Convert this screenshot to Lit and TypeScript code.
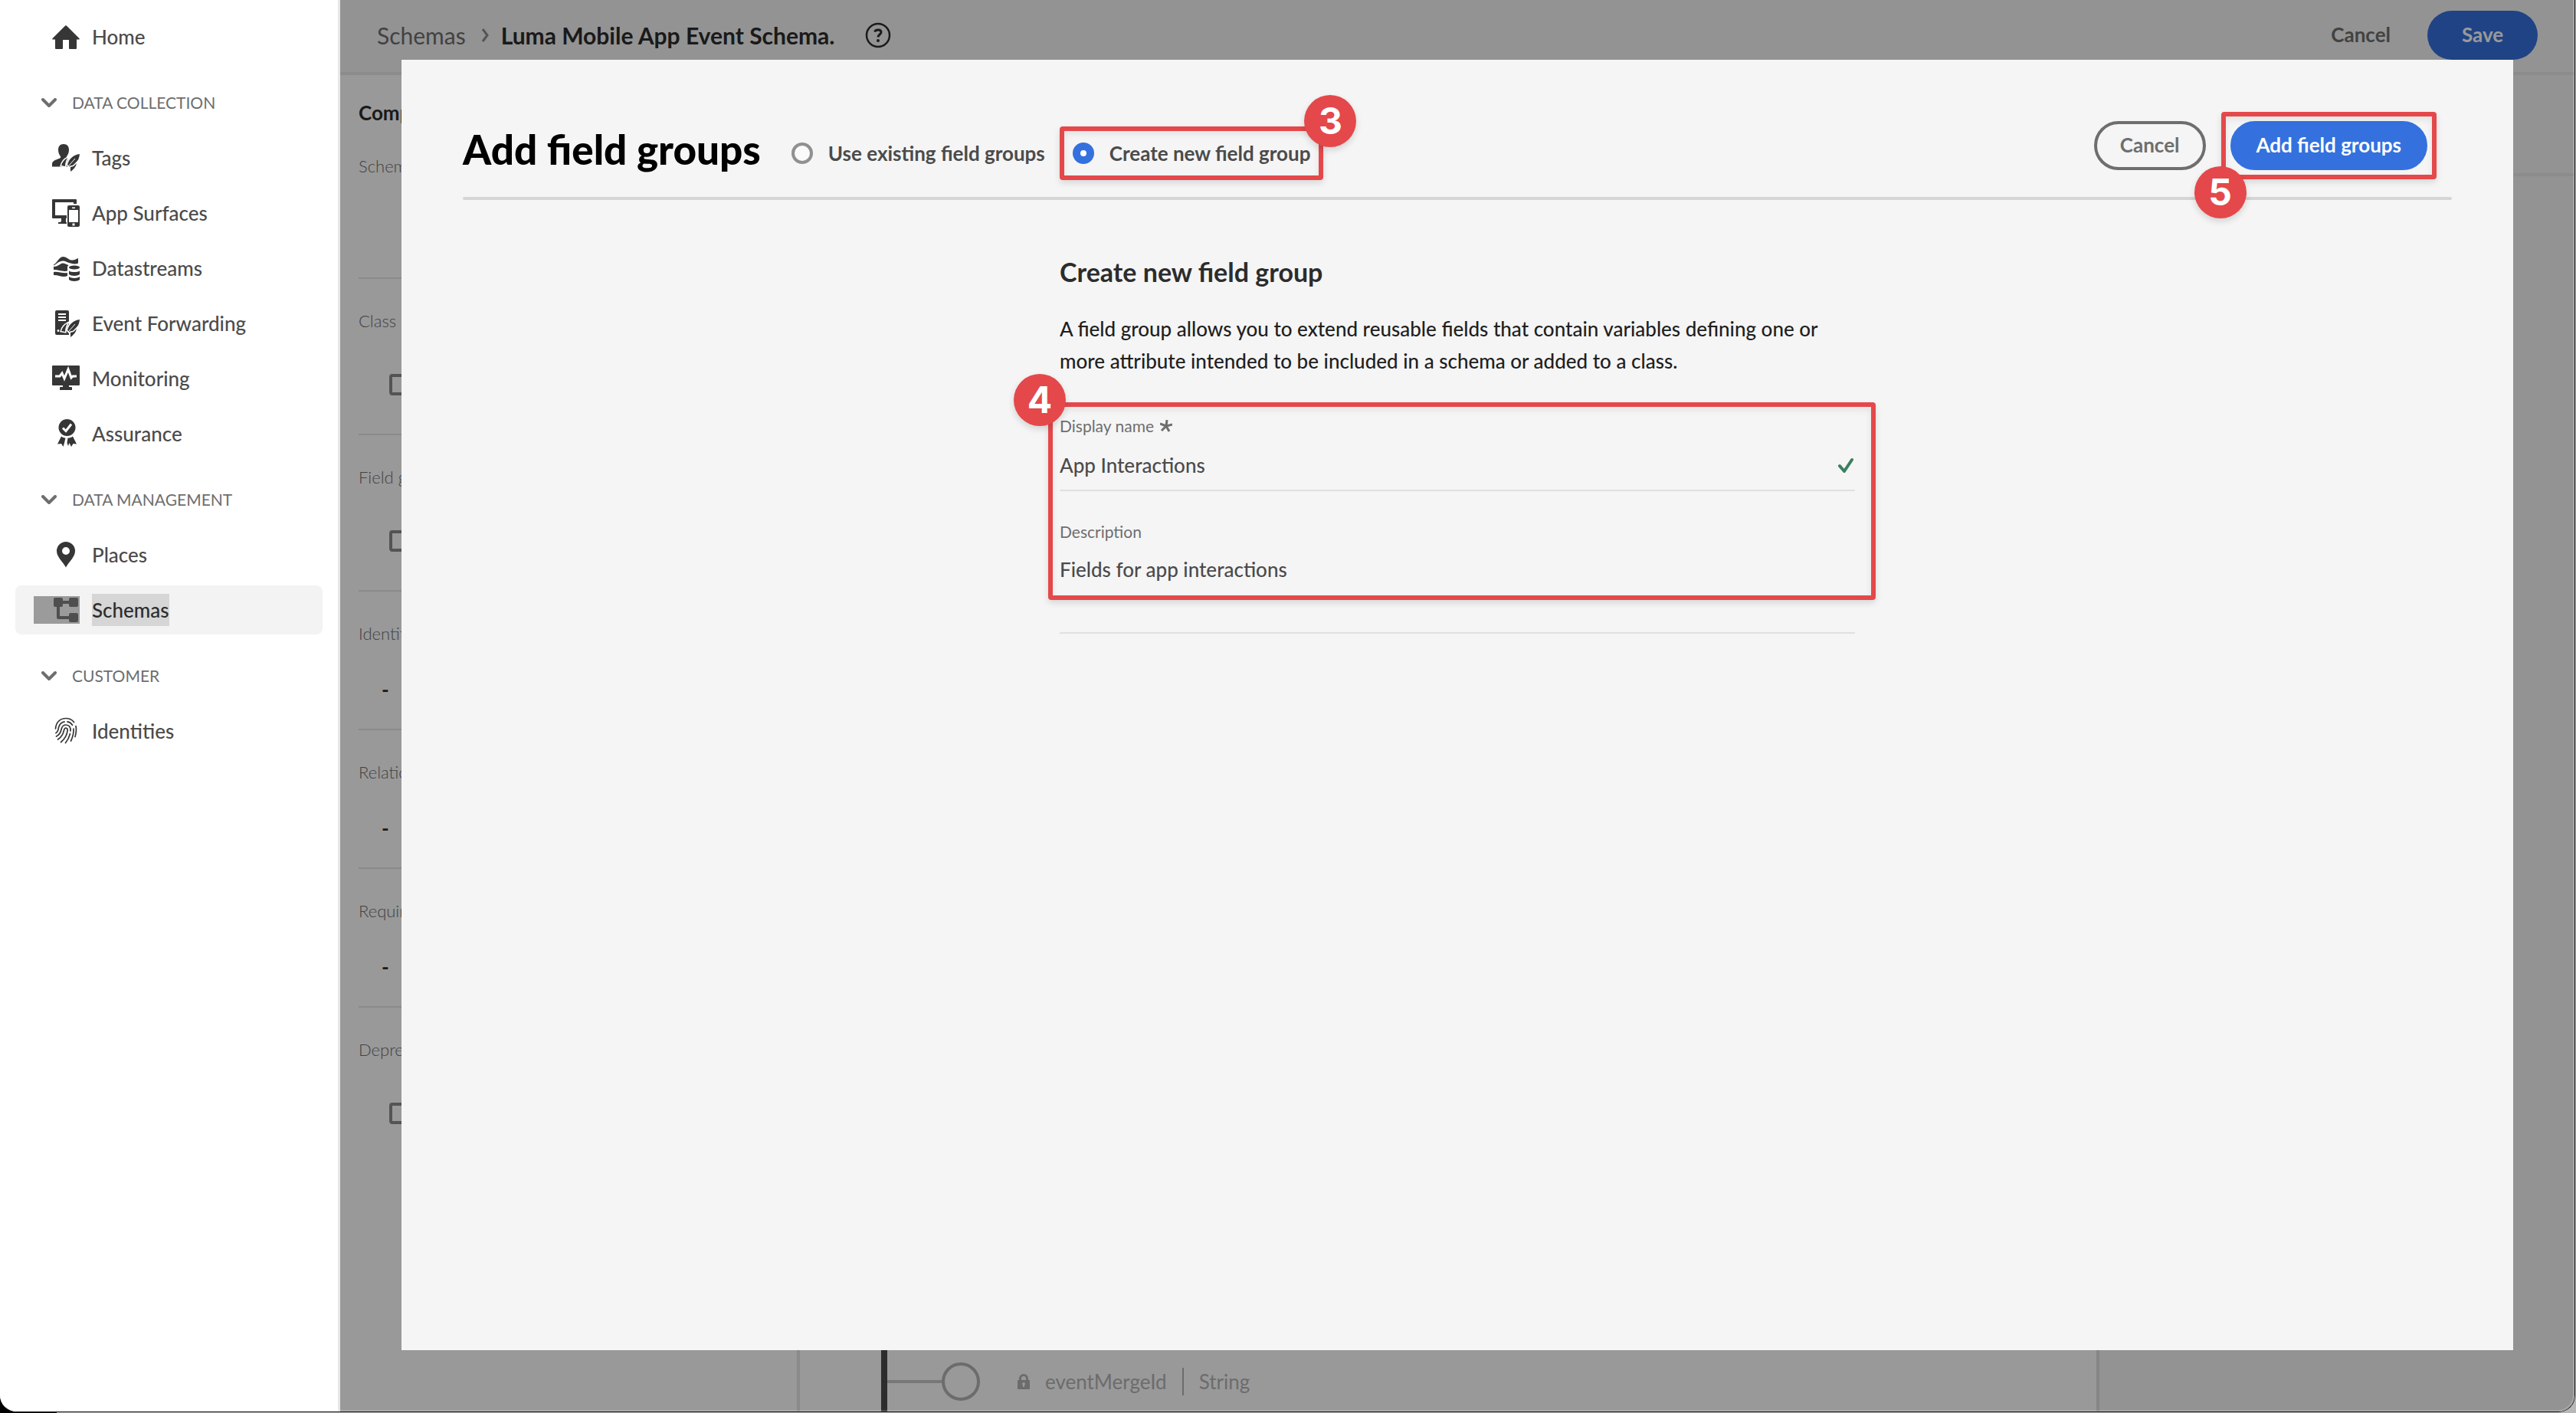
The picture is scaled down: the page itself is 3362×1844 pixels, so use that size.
import { LitElement, html, css, svg, nothing, type TemplateResult } from "lit";
import { customElement, property } from "lit/decorators.js";
import { classMap } from "lit/directives/class-map.js";

const feather = svg`
  <path class="halo" d="M36 13C28 14 22 19 20 27l3 3C30 28 35 22 36 13Z" />
  <path class="halo" d="M20 18C16 20 13 24 12 28l5 1C17 25 18 22 20 18Z" />
  <path class="halo" d="M32 25l-4 4-4 1v6C28 33 31 30 32 25Z" />
  <path class="halo-line" d="M21 29 30 19" />`;

const icons: Record<string, TemplateResult | ReturnType<typeof svg>> = {
  home: svg`<path d="M18 3.2a1 1 0 0 1 .8.4L35.6 20.2a.9.9 0 0 1-.6 1.4h-3V33a1 1 0 0 1-1 1h-8a1 1 0 0 1-1-1V22.500a.5.5 0 0 0-.5-.5h-7a.5.5 0 0 0-.5.500V33a1 1 0 0 1-1 1H5a1 1 0 0 1-1-1V21.600H1a.9.9 0 0 1-.6-1.400L17.200 3.600A1 1 0 0 1 18 3.200Z" />`,
  tags: svg`<path d="M15 0c4.600 0 7 3 7 7.600 0 3.800-1.400 6.800-3 8.400v2.500c0 1.500 8 2.500 9 6.500v4.500H0V26c0-4 5-5.500 9-7 1.500-.6 2-.8 2-1.500V16c-1.600-1.600-3-4.600-3-8.400C8 3 10.400 0 15 0Z" />${feather}`,
  surfaces: svg`
    <path d="M1 0h30a1 1 0 0 1 1 1v5h-4V4H4v17h15v4h-1v5h1v2H8v-2h2a2 2 0 0 0 2-2v-3H1a1 1 0 0 1-1-1V1a1 1 0 0 1 1-1Z" />
    <path fill-rule="evenodd" d="M22 8h12a2 2 0 0 1 2 2v24a2 2 0 0 1-2 2H22a2 2 0 0 1-2-2V10a2 2 0 0 1 2-2Zm0 6v16h12V14Zm4-3.500v1.500h4v-1.500Zm.5 21v3h3v-3Z" />`,
  datastreams: svg`
    <path d="M2 13.500C6 12 9 3 14 3c6 0 7 4.500 11.500 4.500C30 7.500 31 6 34 5v6.500c-3 1.500-6 1-10 0C19 10 17 8.500 14 8.500c-5 0-8 4-12 6Z" />
    <path d="M2 16c7 0 8-4.500 12-4.500 3 0 4.500 1.500 7.500 2.500L20 16v5.500C14 23 9 20 2 20Z" />
    <path d="M2 23c6-1 11 2 18 1v4C14 31 8 26.500 2 27Z" />
    <ellipse cx="29" cy="17" rx="7" ry="2.600" />
    <path d="M22 21.500c3 2 11 2 14 0v4.500c-3 2.500-11 2.500-14 0Z" />
    <path d="M22 29c3 2.500 11 2.500 14 0v4c-3 2.600-11 2.600-14 0Z" />`,
  forwarding: svg`
    <path fill-rule="evenodd" d="M6 1h14a2 2 0 0 1 2 2v30H6a2 2 0 0 1-2-2V3a2 2 0 0 1 2-2Zm2 4v2h10V5Zm0 4v2h10V9Zm0 4v2h10v-2ZM8 26a1.500 1.500 0 1 0 0 3 1.500 1.500 0 0 0 0-3Z" />${feather}`,
  monitoring: svg`
    <path d="M1 1h34a1 1 0 0 1 1 1v24a1 1 0 0 1-1 1H22v2h3a1 1 0 0 1 1 1v3H10v-3a1 1 0 0 1 1-1h3v-2H1a1 1 0 0 1-1-1V2a1 1 0 0 1 1-1Z" />
    <path class="cut" d="M4 15h6l3-4 3 7 5-12 4 11 2-2h5" />`,
  assurance: svg`
    <circle cx="19.500" cy="10" r="11" />
    <path class="cut" d="m14 10.500 4 4 7-9" />
    <path d="M12 21.500c2 1.500 3.500 2 5.500 2L16 30l-1.500 5-2.500-4-5 .5Z M20.500 23.500c3 0 4.500-.5 6.500-2l5 10-4.500-.5L25 35l-2.500-5-1.500 4-1.500-4Z" />`,
  places: svg`<path fill-rule="evenodd" d="M18 1a12 12 0 0 1 12 12c0 8-8 14-12 21.500C14 27 6 21 6 13A12 12 0 0 1 18 1Zm0 7a5 5 0 1 0 0 10 5 5 0 0 0 0-10Z" />`,
  schemas: svg`<path d="M4 2h8a2 2 0 0 1 2 2v2h8V4a2 2 0 0 1 2-2h8a2 2 0 0 1 2 2v8a2 2 0 0 1-2 2h-8a2 2 0 0 1-2-2v-2h-8v2a2 2 0 0 1-2 2h-2v12h12v-2a2 2 0 0 1 2-2h8a2 2 0 0 1 2 2v8a2 2 0 0 1-2 2h-8a2 2 0 0 1-2-2v-2H8a2 2 0 0 1-2-2V14H4a2 2 0 0 1-2-2V4a2 2 0 0 1 2-2Z" />`,
  identities: svg`<g class="ridge">
    <path d="M4.500 15C5 7 10 1.500 18 1.500c4.500 0 8 1.500 10.500 5" />
    <path d="M5 20.500c3-1.500 3-4.500 3.500-7C9.500 9 12.500 6.500 16 5.800M20 5.800c3 .5 5 2 6.500 4.500" />
    <path d="M31 11.500c1 5 .5 9-1 14M5.500 25c5-2.500 6-6 6.800-10 .9-3.500 3-5 5.700-5 4.500 0 6.500 3.500 6 8" />
    <path d="M7.500 29c6-4 7-8 8.500-13.500 1-2.500 4.500-1.500 4.200 1.500C19.500 23 17 28 11.500 32.500" />
    <path d="M28 15c.3 6-1 11-3.500 16M23.500 21.500c-1.300 5-3.500 9-6 12" />
  </g>`,
};

@customElement("nav-icon")
class NavIcon extends LitElement {
  @property() name = "home";

  static styles = css`
    :host { display: block; width: 36px; height: 36px; color: #363636; }
    .art { display: block; width: 36px; height: 36px; fill: currentColor; overflow: visible; }
    .halo { stroke: #fff; stroke-width: 3; paint-order: stroke; }
    .halo-line { fill: none; stroke: #fff; stroke-width: 1; }
    .cut { fill: none; stroke: #fff; stroke-width: 3; }
    .ridge { fill: none; stroke: currentColor; stroke-width: 1.7; stroke-linecap: round; }
  `;

  render() {
    return html`<svg class="art" viewBox="0 0 36 36" aria-hidden="true">${icons[this.name]}</svg>`;
  }
}

interface NavEntry {
  label: string;
  icon: string;
  selected?: boolean;
}

interface NavSection {
  title?: string;
  entries: NavEntry[];
}

const sections: NavSection[] = [
  { entries: [{ label: "Home", icon: "home" }] },
  {
    title: "DATA COLLECTION",
    entries: [
      { label: "Tags", icon: "tags" },
      { label: "App Surfaces", icon: "surfaces" },
      { label: "Datastreams", icon: "datastreams" },
      { label: "Event Forwarding", icon: "forwarding" },
      { label: "Monitoring", icon: "monitoring" },
      { label: "Assurance", icon: "assurance" },
    ],
  },
  {
    title: "DATA MANAGEMENT",
    entries: [
      { label: "Places", icon: "places" },
      { label: "Schemas", icon: "schemas", selected: true },
    ],
  },
  { title: "CUSTOMER", entries: [{ label: "Identities", icon: "identities" }] },
];

@customElement("side-nav")
class SideNav extends LitElement {
  static styles = css`
    :host { display: block; flex: none; width: 444px; box-sizing: border-box; padding: 16px 20px; border-right: 3px solid #e6e6e6; background: #fff; }
    .nav { display: flex; flex-direction: column; gap: 8px; }
    .head { display: flex; align-items: center; gap: 20px; height: 48px; margin-top: 22px; margin-bottom: 8px; padding: 0 0 0 34px; border: 0; background: none; color: #6e6e6e; font: 21px/28px Lato, "Open Sans", sans-serif; text-align: left; }
    .chevron { width: 20px; height: 12px; fill: none; stroke: #6e6e6e; stroke-width: 4; stroke-linecap: round; stroke-linejoin: round; }
    .item { display: flex; align-items: center; gap: 16px; height: 64px; padding-left: 24px; border-radius: 8px; color: #4b4b4b; font-size: 26px; line-height: 42px; font-weight: 500; text-decoration: none; }
    .selected { background: #f3f3f3; color: #2c2c2c; }
    .glyph { padding-left: 24px; }
    .selected .glyph { background: #9b9b9b; }
    .selected nav-icon { color: #4f4f4f; }
    .selected .label { background: #d6d6d6; }
  `;

  render() {
    return html`<nav class="nav">
      ${sections.map(
        (s) => html`
          ${s.title
            ? html`<button class="head">
                <svg class="chevron" viewBox="0 0 20 12" aria-hidden="true"><path d="m2 2 8 8 8-8" /></svg>${s.title}
              </button>`
            : nothing}
          ${s.entries.map(
            (e) => html`<a class=${classMap({ item: true, selected: !!e.selected })} href="#">
              <span class="glyph"><nav-icon name=${e.icon}></nav-icon></span>
              <span class="label">${e.label}</span>
            </a>`
          )}
        `
      )}
    </nav>`;
  }
}

interface Part {
  label: string;
  kind: "box" | "dash";
}

const parts: Part[] = [
  { label: "Class", kind: "box" },
  { label: "Field groups", kind: "box" },
  { label: "Identities", kind: "dash" },
  { label: "Relationships", kind: "dash" },
  { label: "Required", kind: "dash" },
  { label: "Deprecated", kind: "box" },
];

@customElement("schema-editor")
class SchemaEditor extends LitElement {
  static styles = css`
    :host { display: flex; flex-direction: column; height: 100%; background: #f5f5f5; }
    .bar { display: flex; align-items: center; height: 92px; padding: 0 48px 2px; border-bottom: 4px solid #eaeaea; }
    .crumb { color: #6e6e6e; font-size: 30px; text-decoration: none; }
    .sep { width: 10px; height: 18px; margin: 0 16px 0 20px; fill: none; stroke: #8e8e8e; stroke-width: 3; }
    .name { margin: 0; color: #2c2c2c; font-size: 30px; font-weight: 700; }
    .help { display: flex; margin-left: 40px; padding: 0; border: 0; background: none; }
    .help-art { width: 34px; height: 34px; }
    .actions { display: flex; align-items: center; gap: 48px; margin-left: auto; }
    .quiet { padding: 0 0 2px; border: 0; background: none; color: #6e6e6e; font: 700 26px/32px Lato, sans-serif; }
    .save { width: 144px; height: 64px; padding: 0 0 2px; border: 0; border-radius: 32px; background: #3471de; color: #fff; font: 700 26px/32px Lato, sans-serif; }
    .work { display: flex; flex: 1; min-height: 0; }
    .comp { flex: 0 0 600px; box-sizing: border-box; padding: 0 24px; border-right: 4px solid #e6e6e6; background: #fff; overflow: hidden; }
    .comp-title { margin: 0; padding-top: 30px; color: #2c2c2c; font-size: 26px; line-height: 38px; font-weight: 700; }
    .lead { height: 162px; padding-top: 34px; }
    .part { border-top: 2px solid #e6e6e6; padding-top: 38px; height: 141px; }
    .tall { height: 164px; }
    .part-name { display: block; color: #6e6e6e; font-size: 22px; line-height: 34px; font-weight: 300; }
    .check { display: block; width: 28px; height: 28px; box-sizing: border-box; margin: 52px 0 0 40px; border: 4px solid #8c8c8c; border-radius: 4px; appearance: none; }
    .dash { display: block; margin: 40px 0 0 30px; color: #2c2c2c; font-size: 26px; line-height: 32px; font-weight: 700; }
    .stage { display: flex; flex: 1; flex-direction: column; min-width: 0; }
    .tools { height: 128px; border-bottom: 4px solid #eaeaea; }
    .split { display: flex; flex: 1; }
    .canvas { display: flex; flex: 1; background: #fff; padding-left: 106px; }
    .tree { display: flex; flex: 1; align-items: flex-end; border-left: 8px solid #4b4b4b; }
    .node { display: flex; align-items: center; height: 78px; color: #b5b5b5; font-size: 26px; }
    .link { width: 71px; height: 4px; background: #c8c8c8; }
    .dot { width: 42px; height: 42px; border: 4px solid #b5b5b5; border-radius: 50%; }
    .lock { width: 16px; height: 20px; margin: 0 20px 0 49px; fill: #b5b5b5; }
    .type { margin-left: 20px; padding-left: 20px; border-left: 2px solid #b5b5b5; line-height: 36px; }
    .details { flex: 0 0 620px; border-left: 4px solid #e0e0e0; }
  `;

  render() {
    return html`
      <header class="bar">
        <a class="crumb" href="#">Schemas</a>
        <svg class="sep" viewBox="0 0 10 18" aria-hidden="true"><path d="m2 1 6 8-6 8" /></svg>
        <h1 class="name">Luma Mobile App Event Schema.</h1>
        <button class="help" aria-label="Help">
          <svg class="help-art" viewBox="0 0 34 34" aria-hidden="true">
            <circle cx="17" cy="17" r="15" fill="none" stroke="#2c2c2c" stroke-width="2.500" />
            <path d="M12.500 12.500c1.500-3.500 8.500-3.500 8.500.5 0 3-4 3-4 6.500" fill="none" stroke="#2c2c2c" stroke-width="3" />
            <circle cx="17" cy="24" r="2" fill="#2c2c2c" />
          </svg>
        </button>
        <div class="actions">
          <button class="quiet">Cancel</button>
          <button class="save">Save</button>
        </div>
      </header>
      <div class="work">
        <section class="comp">
          <h2 class="comp-title">Composition</h2>
          <div class="lead"><span class="part-name">Schema</span></div>
          ${parts.map(
            (p) => html`<div class=${classMap({ part: true, tall: p.kind === "box" })}>
              <span class="part-name">${p.label}</span>
              ${p.kind === "box"
                ? html`<input class="check" type="checkbox" aria-label=${p.label} />`
                : html`<span class="dash">-</span>`}
            </div>`
          )}
        </section>
        <section class="stage">
          <div class="tools"></div>
          <div class="split">
            <div class="canvas">
              <div class="tree">
                <div class="node">
                  <span class="link"></span><span class="dot"></span>
                  <svg class="lock" viewBox="0 0 16 20" aria-hidden="true">
                    <path fill-rule="evenodd" d="M2 8V6a6 6 0 0 1 12 0v2h1a1 1 0 0 1 1 1v10a1 1 0 0 1-1 1H1a1 1 0 0 1-1-1V9a1 1 0 0 1 1-1Zm3 0h6V6a3 3 0 0 0-6 0Zm3 3a2 2 0 0 0-1 3.700V17h2v-2.300A2 2 0 0 0 8 11Z" />
                  </svg>
                  <span>eventMergeId</span><span class="type">String</span>
                </div>
              </div>
            </div>
            <aside class="details"></aside>
          </div>
        </section>
      </div>
    `;
  }
}

@customElement("field-group-dialog")
class FieldGroupDialog extends LitElement {
  static styles = css`
    :host { display: block; background: #f5f5f5; padding: 80px 80px 0; }
    .head { display: flex; align-items: flex-start; height: 99px; }
    .title { margin: 0; color: #000; font-size: 53px; line-height: 74px; font-weight: 900; }
    .modes { display: flex; align-items: center; gap: 36px; height: 84px; margin: 0 0 0 40px; padding: 0; border: 0; }
    .mode { position: relative; display: flex; align-items: center; gap: 20px; color: #4b4b4b; font-size: 26px; line-height: 32px; font-weight: 700; }
    .radio { width: 28px; height: 28px; margin: 0; border: 4px solid #909090; border-radius: 50%; background: #fafafa; appearance: none; }
    .radio:checked { border: 10px solid #3471de; background: #fff; }
    .actions { display: flex; gap: 32px; margin: 0 32px 0 auto; }
    .button { display: block; min-width: 144px; height: 64px; padding: 0 30px 2px; border: 4px solid #6e6e6e; border-radius: 32px; background: none; color: #6e6e6e; font: 700 26px/32px Lato, sans-serif; }
    .primary { border-color: #3471de; background: #3471de; color: #fff; }
    .anchor { position: relative; }
    .rule { height: 4px; margin: 0; border: 0; border-radius: 2px; background: #d5d5d5; }
    .form { width: 1038px; max-width: 100%; margin: 0 auto; padding-top: 74px; }
    .form-title { margin: 0; color: #2c2c2c; font-size: 34px; line-height: 40px; font-weight: 700; }
    .text { margin: 33px 0 49px; color: #1f1f1f; font-size: 26px; line-height: 42px; font-weight: 500; }
    .fields { position: relative; }
    .field { display: flex; flex-direction: column; gap: 4px; }
    .field + .field { margin-top: 38px; }
    .label { display: flex; align-items: center; gap: 8px; color: #6e6e6e; font-size: 21px; line-height: 30px; }
    .star { width: 16px; height: 16px; stroke: #6e6e6e; stroke-width: 3; }
    .entry { display: flex; align-items: center; border-bottom: 2px solid #e0e0e0; }
    .box { flex: 1; min-width: 0; height: 64px; box-sizing: border-box; padding: 0; border: 0; background: none; color: #4b4b4b; font: 500 26px/42px Lato, sans-serif; outline: 0; }
    .area { height: 112px; padding-top: 9px; resize: none; }
    .tick { width: 22px; height: 20px; fill: none; stroke: #3a7f5f; stroke-width: 4; stroke-linecap: round; stroke-linejoin: round; }
    .mark { position: absolute; border: 6px solid #e4484b; border-radius: 4px; box-shadow: 0 4px 8px rgba(0, 0, 0, 0.12), inset 0 4px 8px rgba(0, 0, 0, 0.08); pointer-events: none; }
    .mark-mode { inset: -19px -17px; }
    .mark-add { inset: -12px; }
    .mark-form { inset: -16px -27px 44px -15px; }
    .badge { position: absolute; display: grid; place-items: center; width: 68px; height: 68px; border-radius: 50%; background: #e4484b; box-shadow: 0 4px 8px rgba(0, 0, 0, 0.14); color: #fff; font: 700 48px/48px Inter, sans-serif; }
    .badge-mode { right: -60px; top: -60px; }
    .badge-form { left: -60px; top: -53px; }
    .badge-add { left: -47px; top: 59px; }
  `;

  render() {
    return html`
      <header class="head">
        <h2 class="title">Add field groups</h2>
        <fieldset class="modes" aria-label="Field group source">
          <label class="mode"><input class="radio" type="radio" name="mode" />Use existing field groups</label>
          <label class="mode">
            <input class="radio" type="radio" name="mode" checked />Create new field group
            <span class="mark mark-mode"></span><span class="badge badge-mode">3</span>
          </label>
        </fieldset>
        <div class="actions">
          <button class="button">Cancel</button>
          <div class="anchor">
            <button class="button primary">Add field groups</button>
            <span class="mark mark-add"></span><span class="badge badge-add">5</span>
          </div>
        </div>
      </header>
      <hr class="rule" />
      <form class="form">
        <h3 class="form-title">Create new field group</h3>
        <p class="text">
          A field group allows you to extend reusable fields that contain variables defining one or more attribute
          intended to be included in a schema or added to a class.
        </p>
        <div class="fields">
          <div class="field">
            <label class="label" for="display-name">Display name
              <svg class="star" viewBox="0 0 16 16" aria-hidden="true"><path d="M8 8 9 0M8 8l8-2M8 8l4 7M8 8l-6 6M8 8 0 5" /></svg>
            </label>
            <div class="entry">
              <input class="box" id="display-name" type="text" .value=${"App Interactions"} />
              <svg class="tick" viewBox="0 0 22 20" aria-hidden="true"><path d="m2 11 6 7L18 3" /></svg>
            </div>
          </div>
          <div class="field">
            <label class="label" for="description">Description</label>
            <div class="entry">
              <textarea class="box area" id="description" .value=${"Fields for app interactions"}></textarea>
            </div>
          </div>
          <span class="mark mark-form"></span><span class="badge badge-form">4</span>
        </div>
      </form>
    `;
  }
}

@customElement("app-root")
class AppRoot extends LitElement {
  static styles = css`
    :host { display: block; height: 100vh; box-sizing: border-box; padding: 0 1px 1px 0; background: linear-gradient(to right, #000 74px, #b8b8b8 74px); font-family: Lato, "Open Sans", sans-serif; }
    .window { position: relative; display: flex; height: 100%; box-sizing: border-box; border: solid #1a1a1a; border-width: 0 1px 1px 0; border-radius: 0 0 22px 22px; overflow: hidden; background: #fff; }
    .main { position: relative; flex: 1; min-width: 0; }
    .scrim { position: absolute; inset: 0; display: grid; padding: 78px 80px 80px; background: rgba(0, 0, 0, 0.4); }
    .edge { position: absolute; inset: 0; border: solid rgba(255, 255, 255, 0.16); border-width: 0 2px 2px 0; border-radius: 0 0 22px 22px; pointer-events: none; }
  `;

  render() {
    return html`<div class="window">
      <side-nav></side-nav>
      <main class="main">
        <schema-editor></schema-editor>
        <div class="scrim"><field-group-dialog role="dialog" aria-modal="true"></field-group-dialog></div>
      </main>
      <span class="edge"></span>
    </div>`;
  }
}
